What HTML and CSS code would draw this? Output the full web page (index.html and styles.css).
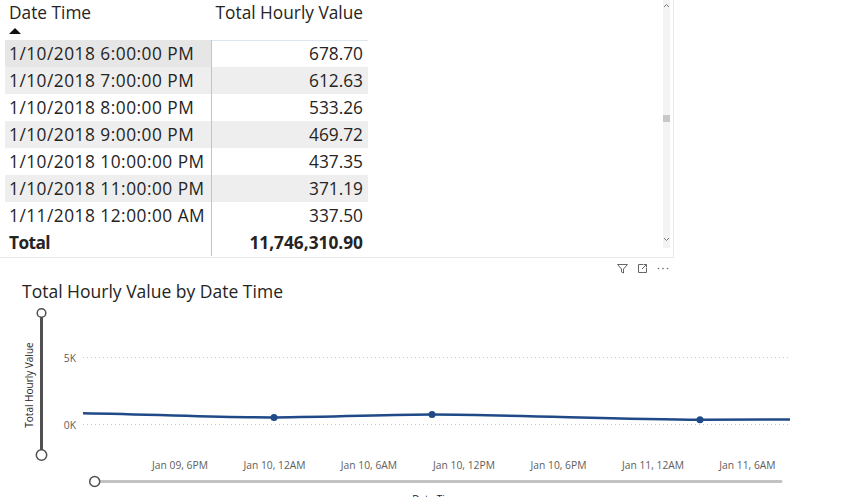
FILE: index.html
```html
<!DOCTYPE html>
<html>
<head>
<meta charset="utf-8">
<link rel="stylesheet" href="styles.css">
</head>
<body>
<div class="page">
  <section class="table-visual">
    <div class="grid">
      <div class="hdr">
        <div class="hcell c1"><span class="htext">Date Time</span><span class="sort"></span></div>
        <div class="hcell c2"><span class="htext">Total Hourly Value</span></div>
      </div>
      <div class="row first"><div class="cell c1">1/10/2018 6:00:00 PM</div><div class="cell c2">678.70</div></div>
      <div class="row alt"><div class="cell c1">1/10/2018 7:00:00 PM</div><div class="cell c2">612.63</div></div>
      <div class="row"><div class="cell c1">1/10/2018 8:00:00 PM</div><div class="cell c2">533.26</div></div>
      <div class="row alt"><div class="cell c1">1/10/2018 9:00:00 PM</div><div class="cell c2">469.72</div></div>
      <div class="row"><div class="cell c1">1/10/2018 10:00:00 PM</div><div class="cell c2">437.35</div></div>
      <div class="row alt"><div class="cell c1">1/10/2018 11:00:00 PM</div><div class="cell c2">371.19</div></div>
      <div class="row"><div class="cell c1">1/11/2018 12:00:00 AM</div><div class="cell c2">337.50</div></div>
      <div class="row total"><div class="cell c1">Total</div><div class="cell c2">11,746,310.90</div></div>
    </div>
    <div class="scrollbar">
      <svg class="sb-arrow" width="7" height="6" viewBox="0 0 7 6"><path d="M1 4 L3.5 1.5 L6 4" fill="none" stroke="#777" stroke-width="1"/></svg>
      <div class="sb-space-top"></div>
      <div class="sb-thumb"></div>
      <div class="sb-space-bottom"></div>
      <svg class="sb-arrow" width="7" height="6" viewBox="0 0 7 6"><path d="M1 2 L3.5 4.5 L6 2" fill="none" stroke="#777" stroke-width="1"/></svg>
    </div>
  </section>

  <section class="chart-visual">
    <div class="chart-head">
      <svg class="ico" width="11" height="11" viewBox="0 0 11 11"><path d="M0.5 1.5 H10.5 L6.5 6 V10 L4.5 9 V6 Z" fill="none" stroke="#666" stroke-width="1"/></svg>
      <svg class="ico" width="11" height="11" viewBox="0 0 11 11"><path d="M6 1.5 H1.5 V9.5 H9.5 V5" fill="none" stroke="#666" stroke-width="1"/><path d="M5 6 L9.5 1.5 M6.5 1.5 H9.5 V4.5" fill="none" stroke="#666" stroke-width="1"/></svg>
      <svg class="ico" width="12" height="11" viewBox="0 0 12 11"><circle cx="1.5" cy="5.5" r="0.8" fill="#666"/><circle cx="6" cy="5.5" r="0.8" fill="#666"/><circle cx="10.5" cy="5.5" r="0.8" fill="#666"/></svg>
    </div>
    <h2 class="chart-title">Total Hourly Value by Date Time</h2>
    <svg class="plot" width="860" height="194" viewBox="0 303 860 194">
      <!-- vertical zoom slider -->
      <line x1="41.5" y1="317" x2="41.5" y2="450" stroke="#505050" stroke-width="3"/>
      <circle cx="41.5" cy="313" r="4.3" fill="#fff" stroke="#505050" stroke-width="1.5"/>
      <circle cx="41.5" cy="455" r="5.2" fill="#fff" stroke="#505050" stroke-width="1.5"/>
      <!-- y axis title -->
      <text class="axis-title" transform="translate(33 385) rotate(-90)" text-anchor="middle">Total Hourly Value</text>
      <!-- y labels -->
      <text class="tick" x="76" y="361.5" text-anchor="end">5K</text>
      <text class="tick" x="76" y="428.5" text-anchor="end">0K</text>
      <!-- gridlines -->
      <line x1="83" y1="357.5" x2="790" y2="357.5" stroke="#c8c8c8" stroke-width="1" stroke-dasharray="1 3"/>
      <line x1="83" y1="424.5" x2="790" y2="424.5" stroke="#c8c8c8" stroke-width="1" stroke-dasharray="1 3"/>
      <!-- data line -->
      <path d="M83 413.2 C160 414.5 220 417.5 274 417.4 C330 417.2 390 414.6 432 414.6 C520 415 620 419.6 700 419.8 C740 419.8 770 419.4 790 419.4" fill="none" stroke="#1f4a87" stroke-width="2.5"/>
      <circle cx="274" cy="417.4" r="3.5" fill="#1f4a87"/>
      <circle cx="432" cy="414.6" r="3.5" fill="#1f4a87"/>
      <circle cx="700" cy="419.8" r="3.5" fill="#1f4a87"/>
      <!-- x labels -->
      <text class="tick" x="180" y="469" text-anchor="middle">Jan 09, 6PM</text>
      <text class="tick" x="274.5" y="469" text-anchor="middle">Jan 10, 12AM</text>
      <text class="tick" x="369" y="469" text-anchor="middle">Jan 10, 6AM</text>
      <text class="tick" x="464" y="469" text-anchor="middle">Jan 10, 12PM</text>
      <text class="tick" x="558.5" y="469" text-anchor="middle">Jan 10, 6PM</text>
      <text class="tick" x="653" y="469" text-anchor="middle">Jan 11, 12AM</text>
      <text class="tick" x="747.5" y="469" text-anchor="middle">Jan 11, 6AM</text>
      <!-- horizontal zoom slider -->
      <line x1="100" y1="481.5" x2="781" y2="481.5" stroke="#c3c3c3" stroke-width="3" stroke-linecap="round"/>
      <circle cx="94.7" cy="481.5" r="5" fill="#fff" stroke="#505050" stroke-width="1.5"/>
      <!-- x axis title (clipped at the bottom edge, as in the original) -->
      <text class="axis-title" x="436" y="503" text-anchor="middle">Date Time</text>
    </svg>
  </section>
</div>
</body>
</html>
```

FILE: styles.css
```css
* {
  box-sizing: border-box;
}

html, body {
  margin: 0;
  padding: 0;
  background: #ffffff;
}

body {
  font-family: "Open Sans", "Noto Sans", sans-serif;
  color: #252423;
  width: 860px;
  height: 497px;
  overflow: hidden;
}

.page {
  display: flex;
  flex-direction: column;
}

/* ---------- table visual ---------- */
.table-visual {
  width: 674px;
  height: 258px;
  display: flex;
  border-right: 1px solid #e8e8e8;
  border-bottom: 1px solid #e8e8e8;
}

.grid {
  padding-left: 5px;
  width: 368px;
  font-size: 17.3px;
  line-height: 24px;
}

.hdr {
  display: flex;
  height: 40px;
}

.hcell {
  padding-top: 1px;
}

.hcell.c1 {
  width: 207px;
  padding-left: 4px;
  display: flex;
  flex-direction: column;
}

.hcell.c2 {
  flex: 1;
  text-align: right;
  padding-right: 5px;
}

.sort {
  margin-top: 3px;
  width: 0;
  height: 0;
  border-left: 6px solid transparent;
  border-right: 6px solid transparent;
  border-bottom: 6px solid #111;
}

.row {
  display: flex;
  height: 27px;
}

.row.alt {
  background: #eeeeee;
}

.cell {
  padding-top: 1.5px;
  white-space: nowrap;
}

.cell.c1 {
  width: 207px;
  padding-left: 4px;
  border-right: 1px solid #a9c9ec;
  letter-spacing: 0.5px;
}

.cell.c2 {
  flex: 1;
  text-align: right;
  padding-right: 5px;
}

.row.first .c1 {
  background: #e6e6e6;
}

.row.first .c2 {
  box-shadow: inset 0 1px 0 #dde7f2;
}

.row.total {
  font-weight: 700;
}

.row.total .c1 {
  letter-spacing: -0.6px;
}

.scrollbar {
  margin-left: auto;
  margin-right: 3px;
  width: 7px;
  height: 248px;
  background: #f3f3f3;
  display: flex;
  flex-direction: column;
  align-items: center;
}

.sb-arrow {
  display: block;
  flex: none;
  margin-top: 3px;
}

.sb-space-top {
  height: 106px;
  flex: none;
}

.sb-thumb {
  width: 7px;
  height: 7px;
  background: #c8c8c8;
  flex: none;
}

.sb-space-bottom {
  flex: 1;
}

.scrollbar .sb-arrow:last-child {
  margin-top: 0;
  margin-bottom: 6px;
}

/* ---------- chart visual ---------- */
.chart-visual {
  display: flex;
  flex-direction: column;
}

.chart-head {
  height: 21px;
  width: 674px;
  display: flex;
  justify-content: flex-end;
  align-items: center;
  gap: 9px;
  padding-right: 5px;
  padding-bottom: 1px;
}

.ico {
  display: block;
}

.chart-title {
  margin: 0;
  padding-left: 22px;
  font-size: 17.5px;
  font-weight: 400;
  line-height: 24px;
  color: #252423;
}

.plot {
  display: block;
}

.tick {
  font-family: "Open Sans", "Noto Sans", sans-serif;
  font-size: 10.3px;
  fill: #605e5c;
}

.axis-title {
  font-family: "Open Sans", "Noto Sans", sans-serif;
  font-size: 10px;
  fill: #252423;
}
```
